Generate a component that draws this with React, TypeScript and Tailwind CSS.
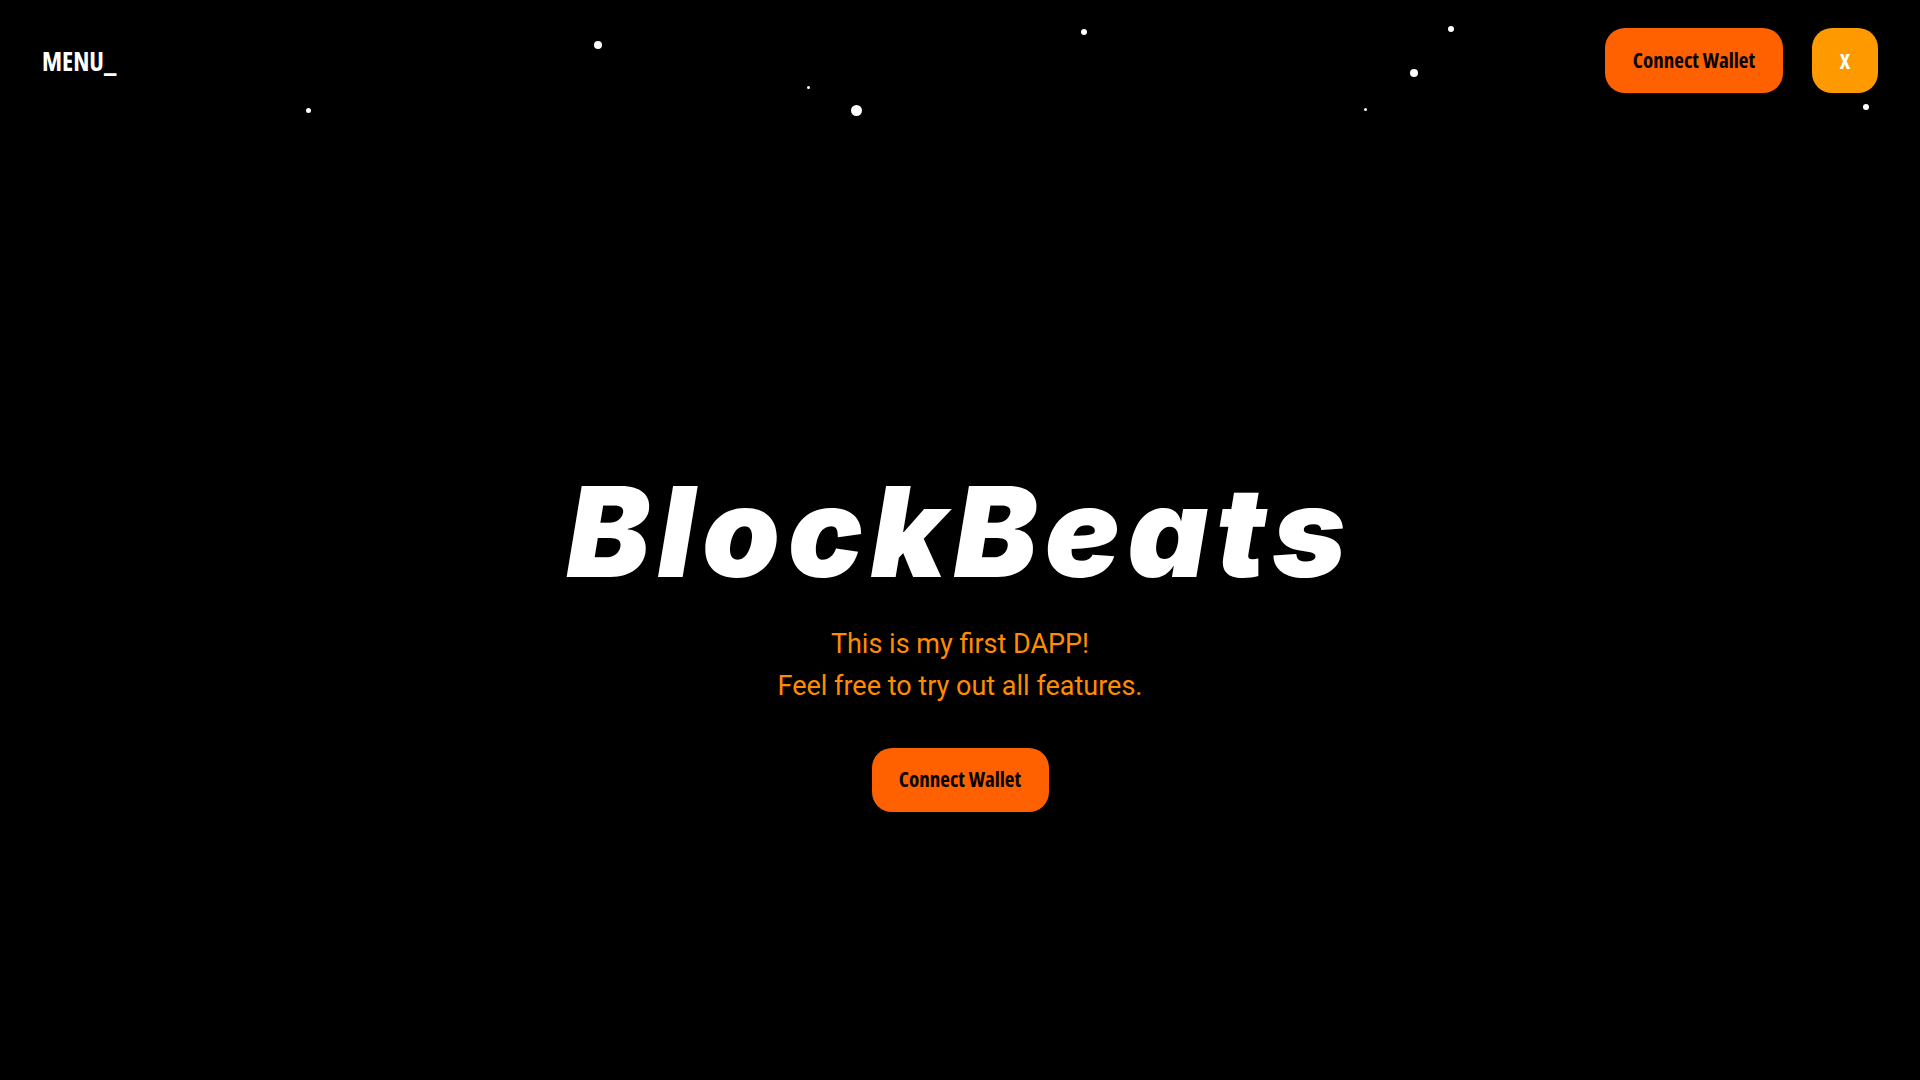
import { useState } from 'react';

const stars = [
  { x: 308, y: 110, s: 5 },
  { x: 598, y: 45, s: 8 },
  { x: 808, y: 87, s: 3 },
  { x: 856, y: 110, s: 11 },
  { x: 1084, y: 32, s: 6 },
  { x: 1365, y: 109, s: 3 },
  { x: 1414, y: 73, s: 8 },
  { x: 1451, y: 29, s: 6 },
  { x: 1866, y: 107, s: 6 },
];

const condensed = "font-['Open_Sans','Liberation_Sans',sans-serif] [font-stretch:75%]";

export default function App() {
  const [menuOpen, setMenuOpen] = useState(false);

  return (
    <div className="relative min-h-screen w-full overflow-hidden bg-black">
      {/* Stars */}
      {stars.map((star, i) => (
        <span
          key={i}
          className="absolute rounded-full bg-white"
          style={{
            left: star.x - star.s / 2,
            top: star.y - star.s / 2,
            width: star.s,
            height: star.s,
          }}
        />
      ))}

      {/* Header */}
      <header className="relative flex items-center justify-between px-[42px] pt-[28px]">
        <button
          onClick={() => setMenuOpen(!menuOpen)}
          className={`${condensed} text-[26px] font-bold leading-none text-white`}
        >
          MENU_
        </button>
        <div className="flex items-center gap-[29px]">
          <button
            className={`${condensed} h-[65px] w-[178px] rounded-[20px] bg-[#ff6000] text-[21px] font-bold text-black`}
          >
            Connect Wallet
          </button>
          <button
            className={`${condensed} h-[65px] w-[66px] rounded-[20px] bg-[#ff9900] text-[22px] font-bold text-white`}
          >
            X
          </button>
        </div>
      </header>

      {/* Hero */}
      <main className="relative flex flex-col items-center pt-[376px]">
        <h1 className="font-['Inter',sans-serif] text-[125px] font-black italic leading-none tracking-[0.06em] text-white">
          BlockBeats
        </h1>
        <div className="mt-[29px] flex flex-col items-center font-['Roboto',sans-serif] text-[27px] leading-[42px] text-[#ff8c00]">
          <p>This is my first DAPP!</p>
          <p>Feel free to try out all features.</p>
        </div>
        <button
          className={`${condensed} mt-[41px] h-[64px] w-[177px] rounded-[20px] bg-[#ff6000] text-[21px] font-bold text-black`}
        >
          Connect Wallet
        </button>
      </main>
    </div>
  );
}
